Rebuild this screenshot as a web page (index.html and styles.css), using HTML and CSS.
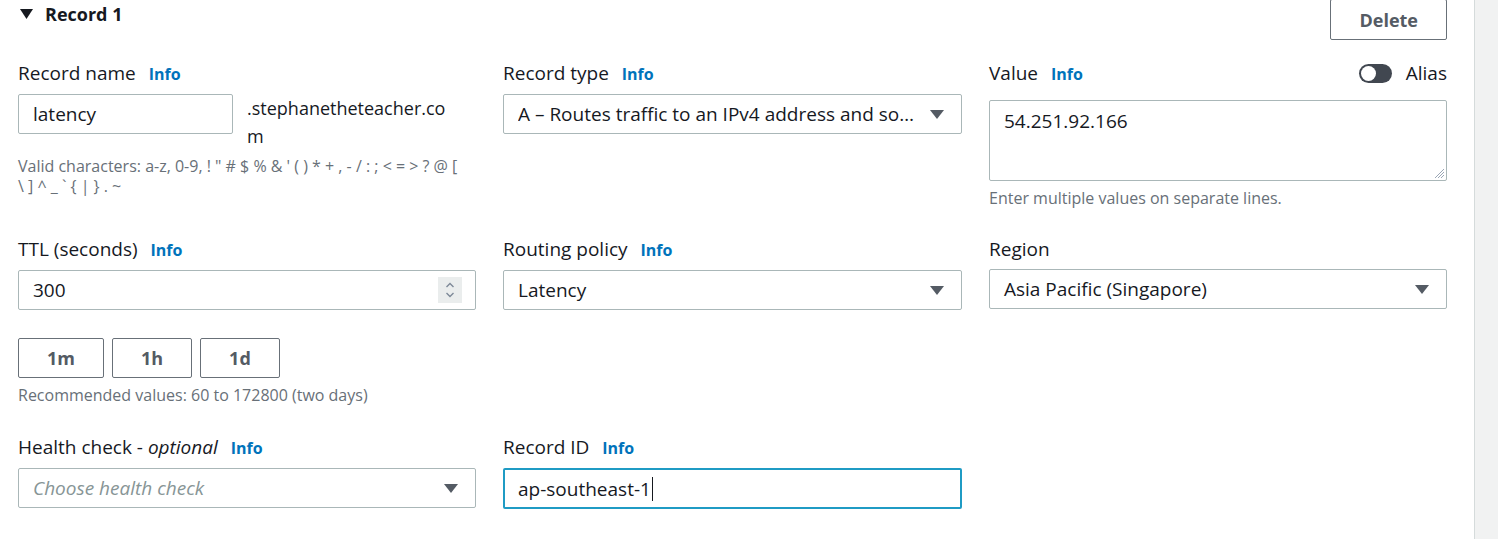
FILE: index.html
```html
<!DOCTYPE html>
<html lang="en">
<head>
<meta charset="utf-8">
<title>Record 1</title>
<link rel="stylesheet" href="styles.css">
</head>
<body>
<div class="page">
  <div class="panel">
    <div class="head">
      <div class="title">
        <svg class="expand" width="13" height="10" viewBox="0 0 13 10"><polygon points="0,0 13,0 6.5,10" fill="#16191f"/></svg>
        <span>Record 1</span>
      </div>
      <button class="btn btn-delete">Delete</button>
    </div>

    <div class="row row1">
      <div class="col">
        <div class="label">Record name <a class="info">Info</a></div>
        <div class="name-line">
          <div class="field field-name"><span>latency</span></div>
          <div class="domain">.stephanetheteacher.com</div>
        </div>
        <div class="hint hint-chars">Valid characters: a-z, 0-9, ! " # $ % &amp; ' ( ) * + , - / : ; &lt; = &gt; ? @ [ \ ] ^ _ ` { | } . ~</div>
      </div>
      <div class="col">
        <div class="label">Record type <a class="info">Info</a></div>
        <div class="field select">
          <span class="ellipsis">A – Routes traffic to an IPv4 address and some AWS resources</span>
          <svg class="caret caret-wide" width="14" height="9" viewBox="0 0 14 9"><polygon points="0,0 14,0 7,9" fill="#545b64"/></svg>
        </div>
      </div>
      <div class="col">
        <div class="label-row">
          <div class="label">Value <a class="info">Info</a></div>
          <div class="alias">
            <span class="toggle"><span class="knob"></span></span>
            <span>Alias</span>
          </div>
        </div>
        <div class="textarea">
          <div class="ta-text">54.251.92.166</div>
          <svg class="grip" width="12" height="12" viewBox="0 0 12 12"><path d="M11 2 L2 11 M11 5 L5 11 M11 8 L8 11" stroke="#9ba7b6" stroke-width="1"/></svg>
        </div>
        <div class="hint hint-value">Enter multiple values on separate lines.</div>
      </div>
    </div>

    <div class="row row2">
      <div class="col">
        <div class="label">TTL (seconds) <a class="info">Info</a></div>
        <div class="field">
          <span>300</span>
          <span class="spinner">
            <svg width="12" height="18" viewBox="0 0 12 18"><path d="M2.5 6 L6 2.5 L9.5 6 M2.5 12 L6 15.5 L9.5 12" fill="none" stroke="#7d8998" stroke-width="1.4"/></svg>
          </span>
        </div>
        <div class="quick">
          <button class="btn btn-q">1m</button>
          <button class="btn btn-q">1h</button>
          <button class="btn btn-q">1d</button>
        </div>
        <div class="hint hint-rec">Recommended values: 60 to 172800 (two days)</div>
      </div>
      <div class="col">
        <div class="label">Routing policy <a class="info">Info</a></div>
        <div class="field select">
          <span>Latency</span>
          <svg class="caret" width="14" height="9" viewBox="0 0 14 9"><polygon points="0,0 14,0 7,9" fill="#545b64"/></svg>
        </div>
      </div>
      <div class="col">
        <div class="label">Region</div>
        <div class="field select">
          <span>Asia Pacific (Singapore)</span>
          <svg class="caret" width="14" height="9" viewBox="0 0 14 9"><polygon points="0,0 14,0 7,9" fill="#545b64"/></svg>
        </div>
      </div>
    </div>

    <div class="row row3">
      <div class="col">
        <div class="label">Health check - <i>optional</i> <a class="info">Info</a></div>
        <div class="field select">
          <span class="placeholder">Choose health check</span>
          <svg class="caret" width="14" height="9" viewBox="0 0 14 9"><polygon points="0,0 14,0 7,9" fill="#545b64"/></svg>
        </div>
      </div>
      <div class="col">
        <div class="label">Record ID <a class="info">Info</a></div>
        <div class="field focused">
          <span>ap-southeast-1</span><span class="cursor"></span>
        </div>
      </div>
      <div class="col"></div>
    </div>
  </div>
  <div class="aside"></div>
</div>
</body>
</html>
```

FILE: styles.css
```css
* { box-sizing: border-box; }

body {
  margin: 0;
  font-family: "Open Sans", "Noto Sans", sans-serif;
  color: #16191f;
  background: #f2f3f3;
  overflow: hidden;
}

.page {
  display: flex;
  height: 539px;
}

.panel {
  width: 1475px;
  flex: none;
  background: #ffffff;
  border-right: 1px solid #d5dbdb;
  padding: 0 27px 0 18px;
}

.aside {
  flex: 1;
  background: #f1f2f2;
}

.head {
  display: flex;
  justify-content: space-between;
  align-items: flex-start;
  height: 40px;
}

.title {
  display: flex;
  align-items: center;
  gap: 12px;
  font-weight: 700;
  font-size: 18px;
  line-height: 28px;
  padding-left: 2px;
}

.btn {
  font-family: inherit;
  font-weight: 700;
  font-size: 18px;
  color: #545b64;
  background: #ffffff;
  border: 1px solid #687078;
  border-radius: 2px;
  height: 40px;
  padding: 0 28px;
  cursor: pointer;
}

.btn-delete {
  margin-top: -1px;
  height: 41px;
  padding: 0 28px;
}

.row {
  display: grid;
  grid-template-columns: 458px 459px 458px;
  column-gap: 27px;
  align-items: start;
}

.row1 { margin-top: 21px; }
.row2 { margin-top: 29px; }
.row3 { margin-top: 30px; }

.col {
  display: flex;
  flex-direction: column;
}

.label {
  font-size: 19px;
  line-height: 24px;
  margin-bottom: 8px;
  white-space: nowrap;
}

.label i { font-style: italic; }

.info {
  color: #0073bb;
  font-weight: 700;
  font-size: 16px;
  margin-left: 8px;
}

.label-row {
  display: flex;
  justify-content: space-between;
  align-items: flex-start;
  margin-bottom: 14px;
}

.label-row .label { margin-bottom: 0; }

.alias {
  display: flex;
  align-items: center;
  gap: 14px;
  font-size: 19px;
  line-height: 24px;
}

.toggle {
  width: 33px;
  height: 19px;
  border-radius: 10px;
  background: #414750;
  position: relative;
  display: inline-block;
}

.knob {
  position: absolute;
  left: 2px;
  top: 2px;
  width: 15px;
  height: 15px;
  border-radius: 50%;
  background: #ffffff;
}

.field {
  height: 40px;
  border: 1px solid #aab7b8;
  border-radius: 2px;
  display: flex;
  align-items: center;
  padding: 0 13px 0 14px;
  font-size: 19px;
  line-height: 24px;
  background: #fff;
}

.field > span:first-child { flex: 1; min-width: 0; }

.select { padding-right: 17px; }

.caret { flex: none; margin-left: 12px; }
.caret-wide { margin-left: 16px; }

.ellipsis {
  white-space: nowrap;
  overflow: hidden;
  text-overflow: ellipsis;
}

.placeholder {
  font-style: italic;
  color: #879596;
}

.name-line {
  display: flex;
  align-items: flex-start;
  gap: 14px;
}

.field-name {
  width: 215px;
  flex: none;
}

.domain {
  width: 212px;
  font-size: 18px;
  line-height: 28px;
  word-break: break-all;
}

.hint {
  font-size: 16px;
  line-height: 20px;
  color: #687078;
}

.hint-chars { margin-top: 6px; max-width: 444px; }
.hint-value { margin-top: 7px; }
.hint-rec { margin-top: 7px; }

.textarea {
  position: relative;
  height: 81px;
  border: 1px solid #aab7b8;
  border-radius: 2px;
  padding: 8px 14px;
  font-size: 19px;
  line-height: 24px;
}

.grip {
  position: absolute;
  right: 1px;
  bottom: 1px;
}

.spinner {
  flex: none;
  width: 24px;
  height: 26px;
  background: #eaeded;
  display: flex;
  align-items: center;
  justify-content: center;
}

.quick {
  display: flex;
  gap: 8px;
  margin-top: 28px;
}

.btn-q { padding: 0 28px; }

.focused {
  border: 2px solid #1f9bc4;
  height: 41px;
  padding-left: 13px;
}

.focused > span:first-child { flex: none; }

.cursor {
  display: inline-block;
  width: 1px;
  height: 24px;
  background: #16191f;
  margin-left: 1px;
}
```
